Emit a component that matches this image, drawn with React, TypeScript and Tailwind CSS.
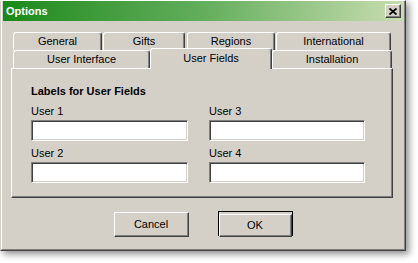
const font = "font-['Liberation_Sans',Arial,sans-serif]";

const tabBase =
  "flex items-center justify-center rounded-t-[3px] border-t border-l border-r border-t-white border-l-white border-r-[#404040] shadow-[inset_-1px_0_0_#808080] bg-[#d4d0c8] text-[11px] leading-[13px] text-black";

const inputCls =
  "h-[21px] bg-white border border-t-[#808080] border-l-[#808080] border-b-white border-r-white shadow-[inset_1px_1px_0_#404040,inset_-1px_-1px_0_#d4d0c8] outline-none px-1 text-[11px]";

function Field({ label, className }: { label: string; className: string }) {
  return (
    <div className="flex flex-col">
      <div className="text-[11px] leading-[13px] text-black">{label}</div>
      <input className={`${inputCls} mt-[2px] ${className}`} />
    </div>
  );
}

function Button({ label, primary }: { label: string; primary?: boolean }) {
  return (
    <div className={`w-[75px] h-[25px] ${primary ? "border border-black" : ""}`}>
      <button
        className={`w-full h-full bg-[#d4d0c8] border border-t-white border-l-white border-r-[#404040] border-b-[#404040] shadow-[inset_-1px_-1px_0_#808080] text-[11px] leading-[13px] text-black`}
      >
        {label}
      </button>
    </div>
  );
}

export default function App() {
  return (
    <div className={`w-[418px] h-[263px] bg-white ${font}`}>
      <div className="w-[406px] h-[251px] bg-[#d4d0c8] border-t border-t-white border-l border-l-[#d4d0c8] border-r border-r-[#404040] border-b border-b-[#404040] shadow-[3px_3px_7px_rgba(0,0,0,0.45)]">
        <div className="h-full border-l border-l-white border-r border-r-[#808080] border-b border-b-[#808080] pl-[1px] pr-[1px] flex flex-col">
          {/* Title bar */}
          <div className="h-[20px] flex items-center justify-between bg-linear-to-r from-[#148a14] via-[#62ae5c] to-[#c8ddb0]">
            <span className="pl-[3px] text-[11px] leading-[13px] font-bold text-white">Options</span>
            <div className="mr-[2px] w-[16px] h-[14px] bg-[#d4d0c8] border border-t-white border-l-white border-r-[#404040] border-b-[#404040] shadow-[inset_-1px_-1px_0_#808080] flex items-center justify-center">
              <svg width="8" height="7" viewBox="0 0 8 7">
                <path d="M0.5 0.5 L7.5 6.5 M7.5 0.5 L0.5 6.5" stroke="black" strokeWidth="1.8" />
              </svg>
            </div>
          </div>

          {/* Tabs + panel */}
          <div className="ml-[8px] mt-[11px] w-[382px]">
            <div className="flex h-[18px] pl-[2px]">
              <div className={`${tabBase} w-[89px] h-[18px]`}>General</div>
              <div className={`${tabBase} w-[82px] h-[18px] ml-[1px]`}>Gifts</div>
              <div className={`${tabBase} w-[88px] h-[18px] ml-[2px]`}>Regions</div>
              <div className={`${tabBase} w-[115px] h-[18px] ml-[1px]`}>International</div>
            </div>
            <div className="flex h-[18px] pl-[2px]">
              <div className={`${tabBase} w-[137px] h-[18px]`}>User Interface</div>
              <div className={`${tabBase} w-[122px] h-[21px] -mt-[2px] relative z-10 pb-[2px]`}>User Fields</div>
              <div className={`${tabBase} w-[120px] h-[18px]`}>Installation</div>
            </div>
            <div className="h-[130px] border-t border-l border-t-white border-l-white border-r border-b border-r-[#404040] border-b-[#404040] shadow-[inset_-1px_-1px_0_#808080] pl-[19px] pt-[16px]">
              <div className="text-[11px] leading-[13px] font-bold text-black">Labels for User Fields</div>
              <div className="grid grid-cols-[178px_178px] mt-[7px] gap-y-[6px]">
                <Field label="User 1" className="w-[157px]" />
                <Field label="User 3" className="w-[156px]" />
                <Field label="User 2" className="w-[157px]" />
                <Field label="User 4" className="w-[156px]" />
              </div>
            </div>
          </div>

          {/* Buttons */}
          <div className="flex justify-center gap-[29px] mt-[13px]">
            <Button label="Cancel" />
            <Button label="OK" primary />
          </div>
        </div>
      </div>
    </div>
  );
}
